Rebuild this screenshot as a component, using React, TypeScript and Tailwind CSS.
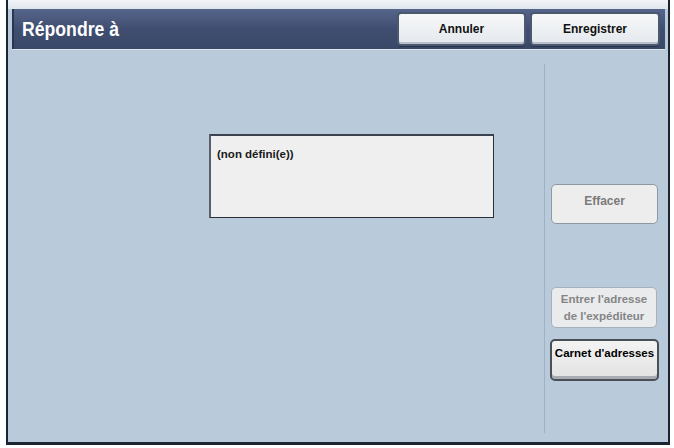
import React from "react";

const ui = { fontFamily: '"Liberation Sans", Arial, sans-serif' };

function HeaderButton({ label }: { label: string }) {
  return (
    <button
      className="w-full h-[34px] rounded-[4px] border-2 border-[#4b5870] bg-gradient-to-b from-[#f7f8fa] to-[#e4e8ec] shadow-[inset_0_-2px_0_#b7c0cb,0_1px_0_#27324a] text-[12px] font-bold text-[#111]"
      style={ui}
    >
      {label}
    </button>
  );
}

export default function App() {
  return (
    <div className="w-[674px] h-[448px] bg-white overflow-hidden">
      <div className="ml-[6px] w-[664px] h-[445px] border-l-2 border-r-2 border-b-[3px] border-[#1c2331] bg-[#b9cadb] flex flex-col">
        {/* top strip */}
        <div className="h-[9px] bg-gradient-to-b from-[#f3f5f7] to-[#dfe6ed]" />

        {/* title bar */}
        <div className="ml-[4px] mr-[3px] h-[40px] bg-gradient-to-b from-[#56658a] via-[#3f4e70] to-[#3a4868] border-l-2 border-[#2a3550] shadow-[0_1px_0_#dbe3ec] flex items-center">
          <div className="flex-1">
            <h1
              className="inline-block ml-[8px] text-[21px] font-bold text-white scale-x-[0.84] origin-left"
              style={ui}
            >
              Répondre à
            </h1>
          </div>
          <div className="flex gap-[4px] mr-[5px]">
            <div className="w-[129px] flex">
              <HeaderButton label="Annuler" />
            </div>
            <div className="w-[130px] flex">
              <HeaderButton label="Enregistrer" />
            </div>
          </div>
        </div>

        {/* body */}
        <div className="flex-1 flex">
          <div className="w-[536px] pl-[201px] pt-[85px]">
            <div className="w-[285px] h-[84px] bg-[#efefef] border border-[#2a2f3a] border-t-2 border-l-2 border-t-[#3c4350] border-l-[#5a606b] px-[6px] pt-[10px]">
              <p className="text-[11.5px] font-bold text-[#1a1a1a]" style={ui}>
                (non défini(e))
              </p>
            </div>
          </div>

          <div className="flex-1 pt-[15px] pb-[9px] flex">
            <div className="w-px bg-[#9fb1c4]" />
            <div className="flex-1 pl-[6px] flex flex-col">
              <div className="h-[120px]" />
              <button
                className="w-[107px] h-[40px] rounded-[5px] border border-[#8f99a3] bg-[#ededed] text-[12px] font-bold text-[#7b7b7b] flex items-start justify-center pt-[7px]"
                style={ui}
              >
                Effacer
              </button>
              <div className="h-[63px]" />
              <button
                className="w-[106px] h-[41px] rounded-[5px] border border-[#a7b1bb] bg-[#e9ebed] text-[11.5px] font-bold leading-[17px] text-[#858585] flex flex-col items-center justify-center"
                style={ui}
              >
                <span>Entrer l'adresse</span>
                <span>de l'expéditeur</span>
              </button>
              <div className="h-[11px]" />
              <button
                className="-ml-[1px] w-[109px] h-[42px] rounded-[5px] border-2 border-[#4a4f57] bg-gradient-to-b from-[#f3f3f3] to-[#e2e2e2] shadow-[inset_0_-3px_0_#a8acb2] text-[11.5px] font-bold text-black flex items-start justify-center pt-[4px] whitespace-nowrap"
                style={ui}
              >
                Carnet d'adresses
              </button>
            </div>
          </div>
        </div>
      </div>
    </div>
  );
}
